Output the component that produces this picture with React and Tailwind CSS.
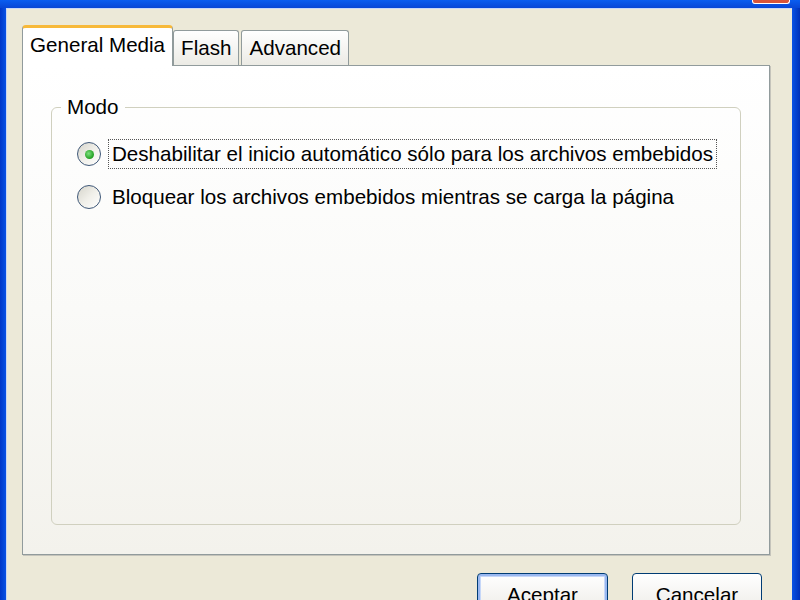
import React from "react";

const font = { fontFamily: '"Liberation Sans", Arial, sans-serif' };

const Radio = ({ checked }) => (
  <span className="flex h-[24px] w-[24px] shrink-0 items-center justify-center rounded-full border-[1.5px] border-[#3f5878] bg-gradient-to-br from-[#d6d5cc] via-[#f0efe9] to-white">
    {checked && (
      <span className="h-[9px] w-[9px] rounded-full bg-[radial-gradient(circle_at_40%_40%,#7fe07f,#1f9e1f_70%)]" />
    )}
  </span>
);

const Tab = ({ label, active }) =>
  active ? (
    <div className="relative z-10 -mb-px flex h-[41px] items-center rounded-t-[4px] border border-b-0 border-[#919b9c] border-t-[3px] border-t-[#f7b93a] bg-white px-[7px] pb-[3px]">
      {label}
    </div>
  ) : (
    <div className="flex h-[35px] items-center rounded-t-[3px] border border-b-0 border-[#919b9c] bg-gradient-to-b from-white to-[#ecebe5] px-[7px]">
      {label}
    </div>
  );

export default function App() {
  return (
    <div className="flex h-[600px] w-[800px] flex-col overflow-hidden bg-[#0a4fe0] text-[20.6px] text-black" style={font}>
      {/* title bar remains */}
      <div className="relative h-[8px] shrink-0 bg-gradient-to-b from-[#0a5df0] to-[#0846d6]">
        <div className="absolute right-[10px] top-0 h-[4px] w-[38px] rounded-b-[3px] border border-t-0 border-white bg-[#d8553a]" />
      </div>
      <div className="flex flex-1">
        <div className="w-[6px] bg-gradient-to-r from-[#0036c8] to-[#0a52e6]" />
        <div className="flex flex-1 flex-col border-l border-t border-[#c9d8f5] bg-[#ece9d8] pl-[15px] pr-[22px] pt-[16px]">
          {/* tabs */}
          <div className="flex items-end">
            <Tab label="General Media" active />
            <Tab label="Flash" />
            <div className="ml-[2px]">
              <Tab label="Advanced" />
            </div>
          </div>
          {/* panel */}
          <div className="h-[490px] border border-[#919b9c] bg-gradient-to-b from-white via-[#fafaf8] to-[#f3f2ec] px-[28px] pb-[29px] pt-[29px] shadow-[1px_1px_0_#c5c4bb]">
            <fieldset className="h-full rounded-[6px] border border-[#d0d0bf] pl-[25px] pr-[10px] pt-[20px]">
              <legend className="ml-[-16px] px-[6px] leading-[24px]">Modo</legend>
              <div className="flex flex-col gap-[13px]">
                <div className="flex items-center gap-[7px]">
                  <Radio checked />
                  <span className="whitespace-nowrap border border-dotted border-[#555] px-[3px] leading-[28px]">
                    Deshabilitar el inicio automático sólo para los archivos embebidos
                  </span>
                </div>
                <div className="flex items-center gap-[7px]">
                  <Radio />
                  <span className="whitespace-nowrap border border-transparent px-[3px] leading-[28px]">
                    Bloquear los archivos embebidos mientras se carga la página
                  </span>
                </div>
              </div>
            </fieldset>
          </div>
          {/* buttons */}
          <div className="mt-[18px] flex justify-end gap-[24px] pr-[8px]">
            <button className="h-[42px] w-[131px] rounded-[4px] border border-[#003c74] bg-gradient-to-b from-white to-[#ecebe6] shadow-[inset_0_0_0_2px_#9ab8f0,inset_0_0_0_3px_#c6d7f8] pt-[2px]">
              Aceptar
            </button>
            <button className="h-[42px] w-[130px] rounded-[4px] border border-[#003c74] bg-gradient-to-b from-white to-[#ecebe6] pt-[2px]">
              Cancelar
            </button>
          </div>
        </div>
        <div className="w-[8px] bg-gradient-to-r from-[#0a52e6] to-[#0030b8]" />
      </div>
    </div>
  );
}
